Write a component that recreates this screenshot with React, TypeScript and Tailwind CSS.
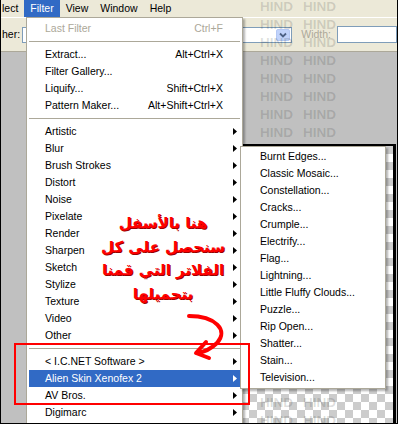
import React from "react";

function Tri({ white }: { white?: boolean }) {
  return (
    <svg width="4" height="7" viewBox="0 0 4 7" className="shrink-0">
      <path d="M0 0L4 3.5L0 7Z" fill={white ? "#fff" : "#000"} />
    </svg>
  );
}

type It = { label?: string; shortcut?: string; sub?: boolean; disabled?: boolean; active?: boolean; sep?: boolean };

const mainItems: It[] = [
  { label: "Last Filter", shortcut: "Ctrl+F", disabled: true },
  { sep: true },
  { label: "Extract...", shortcut: "Alt+Ctrl+X" },
  { label: "Filter Gallery..." },
  { label: "Liquify...", shortcut: "Shift+Ctrl+X" },
  { label: "Pattern Maker...", shortcut: "Alt+Shift+Ctrl+X" },
  { sep: true },
  { label: "Artistic", sub: true },
  { label: "Blur", sub: true },
  { label: "Brush Strokes", sub: true },
  { label: "Distort", sub: true },
  { label: "Noise", sub: true },
  { label: "Pixelate", sub: true },
  { label: "Render", sub: true },
  { label: "Sharpen", sub: true },
  { label: "Sketch", sub: true },
  { label: "Stylize", sub: true },
  { label: "Texture", sub: true },
  { label: "Video", sub: true },
  { label: "Other", sub: true },
  { sep: true },
  { label: "< I.C.NET Software >", sub: true },
  { label: "Alien Skin Xenofex 2", sub: true, active: true },
  { label: "AV Bros.", sub: true },
  { label: "Digimarc", sub: true },
];

const subItems = [
  "Burnt Edges...",
  "Classic Mosaic...",
  "Constellation...",
  "Cracks...",
  "Crumple...",
  "Electrify...",
  "Flag...",
  "Lightning...",
  "Little Fluffy Clouds...",
  "Puzzle...",
  "Rip Open...",
  "Shatter...",
  "Stain...",
  "Television...",
];

export default function App() {
  const rows = Array.from({ length: 24 });
  return (
    <div className="relative w-[398px] h-[424px] overflow-hidden border-x border-b border-black bg-[#c0c0c0] font-['Liberation_Sans',Arial,sans-serif] text-[10.5px] text-black flex flex-col">
      {/* menu bar */}
      <div className="h-[17px] bg-[#ece9d8] flex items-stretch shrink-0">
        <div className="pl-[1px] pr-[6px] flex items-center">lect</div>
        <div className="px-[6px] flex items-center bg-[#316ac5] text-white">Filter</div>
        <div className="px-[6px] flex items-center">View</div>
        <div className="px-[6px] flex items-center">Window</div>
        <div className="px-[6px] flex items-center">Help</div>
      </div>
      {/* options bar */}
      <div className="h-[35px] bg-[#ece9d8] border-t border-white border-b border-b-[#aca899] flex items-center shrink-0">
        <span className="w-[22px] pl-[1px]">her:</span>
        <div className="w-[200px] h-[16px] bg-white border border-[#7f9db9]" />
        <div className="ml-[17px] w-[71px] h-[16px] bg-white border border-[#7f9db9] flex justify-end p-[1px]">
          <div className="w-[14px] h-full rounded-[2px] bg-[#c1d3fb] border border-[#b4c8f4] flex items-center justify-center">
            <svg width="8" height="6" viewBox="0 0 8 6">
              <path d="M1 1.5L4 4.5L7 1.5" stroke="#4d6185" strokeWidth="1.8" fill="none" />
            </svg>
          </div>
        </div>
        <span className="ml-[9px] text-[#aca899]">Width:</span>
        <div className="ml-[6px] w-[60px] h-[17px] bg-white border border-[#7f9db9] shrink-0" />
      </div>
      {/* workspace */}
      <div className="flex-1 bg-[#c0c0c0]" />

      {/* image document */}
      <div className="absolute left-[200px] top-[144px] w-[195px] bottom-0 border-t-2 border-r-[3px] border-black bg-[conic-gradient(#cccccc_25%,#ffffff_0_50%,#cccccc_0_75%,#ffffff_0)] bg-[length:16px_16px]" />

      {/* watermark */}
      <div className="absolute left-[259px] top-[-2px] flex flex-col pointer-events-none font-bold text-[13.5px] text-[rgba(0,0,0,0.14)]">
        {rows.map((_, i) => (
          <div key={i} className="h-[18px] leading-[18px] flex">
            <span className="w-[43px]">HIND</span>
            <span>HIND</span>
          </div>
        ))}
      </div>

      {/* main Filter menu */}
      <div className="absolute left-[25px] top-[17px] w-[217px] h-[420px] bg-white border border-[#aca899] px-[2px] pt-[2px] shadow-[2px_2px_2px_rgba(0,0,0,0.3)]">
        {mainItems.map((it, i) =>
          it.sep ? (
            <div key={i} className="h-[9px] flex items-center">
              <div className="h-px w-full bg-[#aca899]" />
            </div>
          ) : (
            <div
              key={i}
              className={`h-[17px] flex items-center pl-[16px] pr-[3px] ${
                it.active ? "bg-[#316ac5] text-white" : it.disabled ? "text-[#aca899]" : "text-black"
              }`}
            >
              <span className="flex-1 whitespace-nowrap">{it.label}</span>
              {it.shortcut && <span className="pr-[14px] whitespace-nowrap">{it.shortcut}</span>}
              {it.sub && <Tri white={it.active} />}
            </div>
          )
        )}
      </div>

      {/* submenu */}
      <div className="absolute left-[239px] top-[146px] w-[146px] bg-white border border-[#aca899] px-[2px] pt-[1px] pb-[2px] shadow-[2px_2px_2px_rgba(0,0,0,0.3)]">
        {subItems.map((s) => (
          <div key={s} className="h-[17px] flex items-center pl-[17px] whitespace-nowrap">
            {s}
          </div>
        ))}
      </div>

      {/* arabic annotation */}
      <div
        dir="rtl"
        className="absolute left-[92px] top-[212px] w-[140px] text-center font-['DejaVu_Sans',sans-serif] font-bold text-[15px] leading-[23.5px] text-[#f00] [text-shadow:1px_1px_0_#900]"
      >
        <div>هنا بالأسفل</div>
        <div>سنحصل على كل</div>
        <div>الفلاتر التي قمنا</div>
        <div>بتحميلها</div>
      </div>

      {/* red box */}
      <div className="absolute left-[13px] top-[343px] w-[236px] h-[62px] border-2 border-[#f00] pointer-events-none" />

      {/* curved arrow */}
      <svg className="absolute left-0 top-0 pointer-events-none" width="398" height="424" viewBox="0 0 398 424">
        <path d="M188 316 C214 316 228 330 216 343 C210 349 203 352 196 353" stroke="#f00" strokeWidth="4" fill="none" strokeLinecap="round" />
        <path d="M205 342 L195 353 L208 358" stroke="#f00" strokeWidth="4" fill="none" strokeLinecap="round" strokeLinejoin="round" />
      </svg>
    </div>
  );
}
